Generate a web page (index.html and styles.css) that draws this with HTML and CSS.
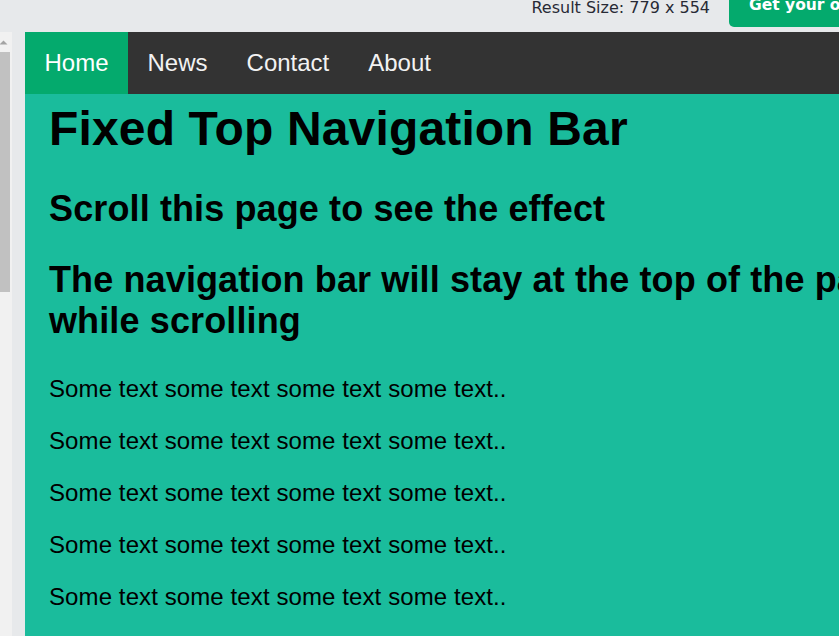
FILE: index.html
```html
<!DOCTYPE html>
<html lang="en">
<head>
<meta charset="utf-8">
<title>Fixed Top Navigation Bar</title>
<link rel="stylesheet" href="styles.css">
</head>
<body>
<header class="topbar">
  <span class="result-size">Result Size: 779 x 554</span>
  <a class="cta">Get your own website</a>
</header>
<div class="workspace">
  <aside class="editor-pane">
    <div class="scrollbar">
      <svg class="arrow" width="10" height="20" viewBox="0 0 10 20" aria-hidden="true"><polygon points="3.5,8.5 -0.5,12.5 7.5,12.5" fill="#a3a3a3"/></svg>
      <div class="thumb"></div>
    </div>
  </aside>
  <section class="result">
    <nav class="topnav">
      <a class="active">Home</a>
      <a>News</a>
      <a>Contact</a>
      <a>About</a>
    </nav>
    <main class="main">
      <h1>Fixed Top Navigation Bar</h1>
      <h2>Scroll this page to see the effect</h2>
      <h2 class="last-heading">The navigation bar will stay at the top of the page while scrolling</h2>
      <p>Some text some text some text some text..</p>
      <p>Some text some text some text some text..</p>
      <p>Some text some text some text some text..</p>
      <p>Some text some text some text some text..</p>
      <p>Some text some text some text some text..</p>
      <p>Some text some text some text some text..</p>
    </main>
  </section>
</div>
</body>
</html>
```

FILE: styles.css
```css
html, body {
  margin: 0;
  height: 100%;
  overflow: hidden;
}

body {
  background: #e7e9eb;
  font-family: "Liberation Sans", Arial, sans-serif;
}

.topbar {
  height: 32px;
  display: flex;
  justify-content: flex-end;
  align-items: flex-start;
  overflow: hidden;
}

.result-size {
  font-family: "DejaVu Sans", sans-serif;
  font-size: 16px;
  line-height: 19px;
  color: #282a35;
  margin-top: -2px;
  margin-right: 19px;
  white-space: nowrap;
}

.cta {
  box-sizing: border-box;
  width: 200px;
  height: 30px;
  margin-top: -3px;
  margin-right: -90px;
  padding-left: 20px;
  background: #04aa6d;
  color: #fff;
  border-radius: 0 0 5px 5px;
  font-family: "DejaVu Sans", sans-serif;
  font-weight: bold;
  font-size: 15.5px;
  line-height: 17px;
  white-space: nowrap;
  overflow: hidden;
}

.workspace {
  display: flex;
  gap: 13px;
  height: 604px;
}

.editor-pane {
  width: 12px;
  flex-shrink: 0;
  background: #f1f1f1;
}

.scrollbar {
  width: 10px;
  display: flex;
  flex-direction: column;
}

.arrow {
  display: block;
}

.thumb {
  height: 240px;
  background: #c1c1c1;
}

.result {
  width: 948px;
  flex-shrink: 0;
  background: #1abc9c;
  overflow: hidden;
}

.topnav {
  display: flex;
  background: #333;
}

.topnav a {
  padding: 17px 19.5px;
  font-size: 24px;
  line-height: 28px;
  color: #f2f2f2;
  text-decoration: none;
}

.topnav a.active {
  background: #04aa6d;
  color: #fff;
}

.main {
  padding: 7px 24px 0;
  color: #000;
}

.main h1 {
  font-size: 48px;
  line-height: 55px;
  letter-spacing: 0.15px;
  margin: 0 0 32px;
}

.main h2 {
  font-size: 36px;
  line-height: 41px;
  letter-spacing: 0.12px;
  margin: 0 0 30px;
}

.main h2.last-heading {
  margin-bottom: 34px;
}

.main p {
  font-size: 24px;
  line-height: 28px;
  letter-spacing: 0.1px;
  margin: 0 0 24px;
}
```
